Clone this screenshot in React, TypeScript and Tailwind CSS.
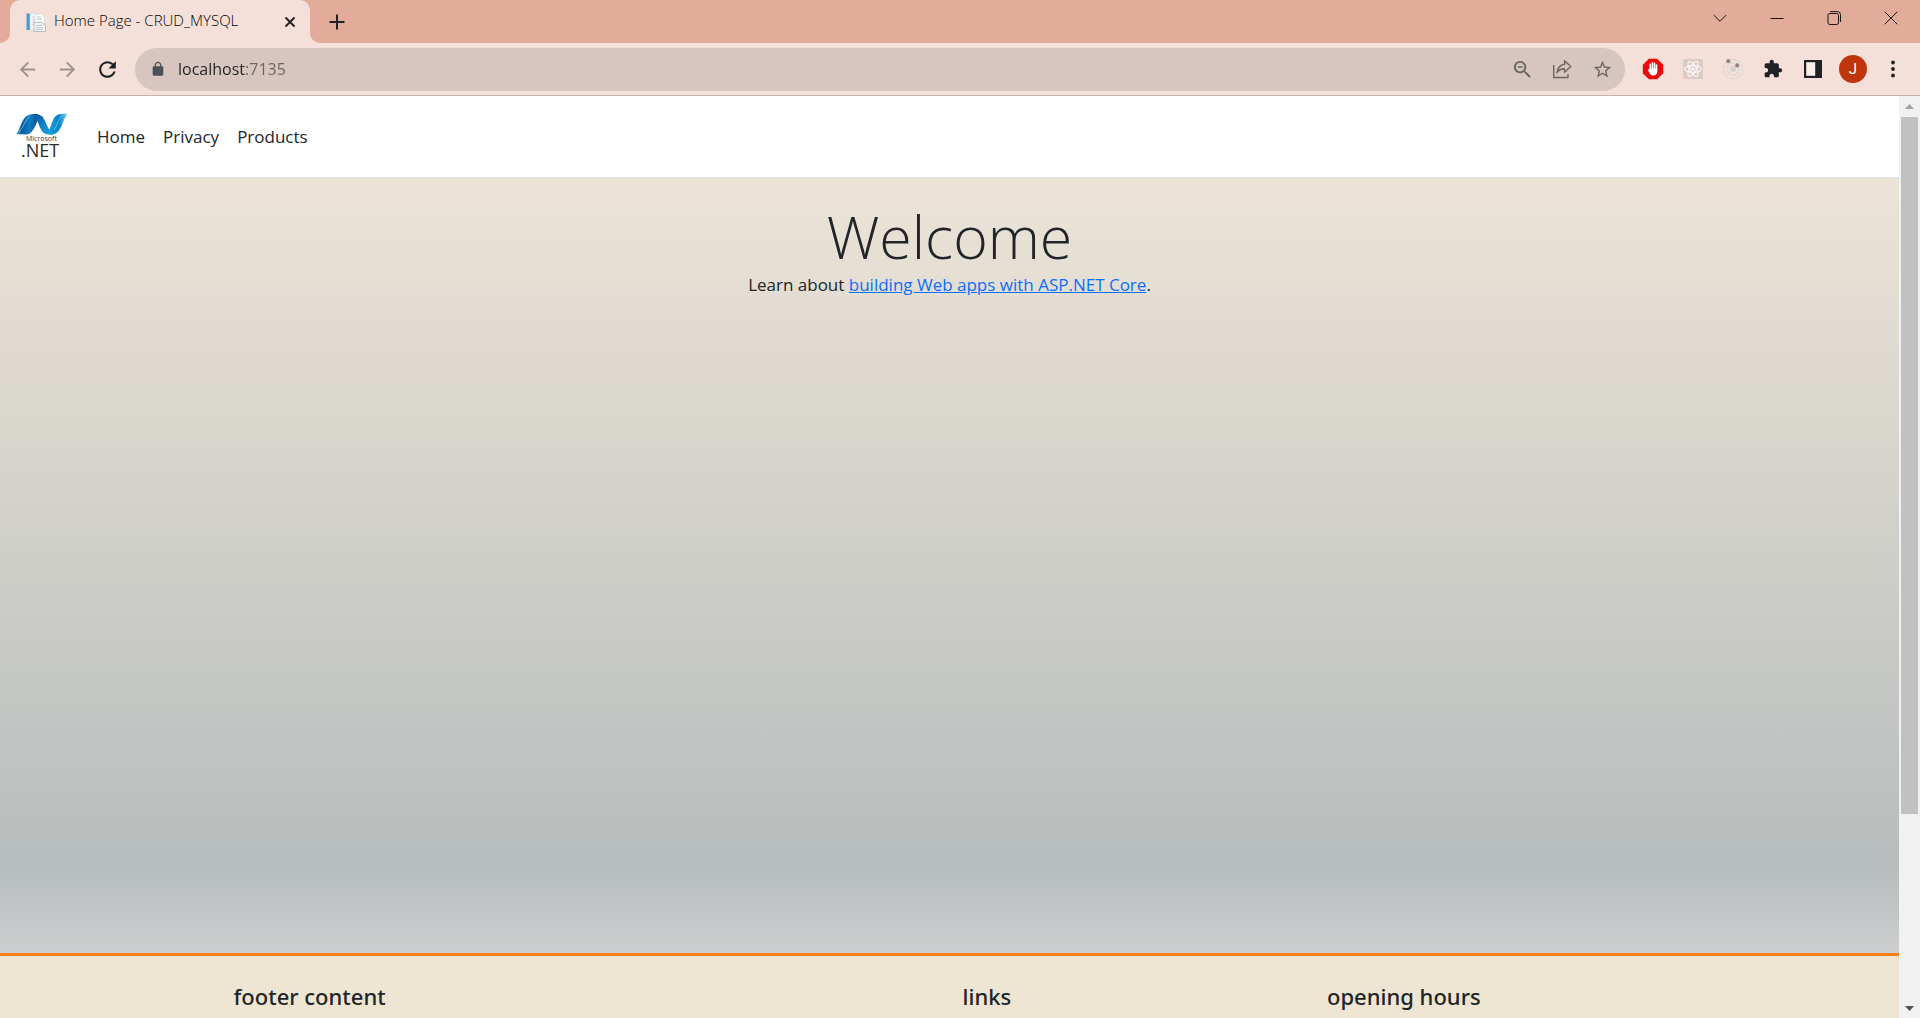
import type { ReactNode } from 'react';

const MATERIAL = {
  back: 'M20 11H7.83l5.59-5.59L12 4l-8 8 8 8 1.41-1.41L7.83 13H20v-2z',
  forward: 'M12 4l-1.41 1.41L16.17 11H4v2h12.17l-5.58 5.59L12 20l8-8z',
  reload:
    'M17.65 6.35C16.2 4.9 14.21 4 12 4c-4.42 0-7.99 3.58-7.99 8s3.57 8 7.99 8c3.73 0 6.84-2.55 7.73-6h-2.08c-.82 2.33-3.04 4-5.65 4-3.31 0-6-2.69-6-6s2.69-6 6-6c1.66 0 3.14.69 4.22 1.78L13 11h7V4l-2.35 2.35z',
  lock: 'M18 8h-1V6c0-2.76-2.24-5-5-5S7 3.24 7 6v2H6c-1.1 0-2 .9-2 2v10c0 1.1.9 2 2 2h12c1.1 0 2-.9 2-2V10c0-1.1-.9-2-2-2zM9 6c0-1.66 1.34-3 3-3s3 1.34 3 3v2H9V6z',
  zoomOut:
    'M15.5 14h-.79l-.28-.27C15.41 12.59 16 11.11 16 9.5 16 5.91 13.09 3 9.5 3S3 5.91 3 9.5 5.91 16 9.5 16c1.61 0 3.09-.59 4.23-1.57l.27.28v.79l5 4.99L20.49 19l-4.99-5zm-6 0C7.01 14 5 11.99 5 9.5S7.01 5 9.5 5 14 7.01 14 9.5 11.99 14 9.5 14zM7 8.7h5v1.6H7z',
  star: 'M22 9.24l-7.19-.62L12 2 9.19 8.63 2 9.24l5.46 4.73L5.82 21 12 17.27 18.18 21l-1.63-7.03L22 9.24zM12 15.4l-3.76 2.27 1-4.28-3.32-2.88 4.38-.38L12 6.1l1.71 4.04 4.38.38-3.32 2.88 1 4.28L12 15.4z',
  puzzle:
    'M20.5 11H19V7c0-1.1-.9-2-2-2h-4V3.5C13 2.12 11.88 1 10.5 1S8 2.12 8 3.5V5H4c-1.1 0-1.99.9-1.99 2v3.8H3.5c1.49 0 2.7 1.21 2.7 2.7s-1.21 2.7-2.7 2.7H2V20c0 1.1.9 2 2 2h3.8v-1.5c0-1.49 1.21-2.7 2.7-2.7 1.49 0 2.7 1.21 2.7 2.7V22H17c1.1 0 2-.9 2-2v-4h1.5c1.38 0 2.5-1.12 2.5-2.5S21.88 11 20.5 11z',
};

function Glyph({ d, className }: { d: string; className: string }) {
  return (
    <svg viewBox="0 0 24 24" className={className} fill="currentColor" aria-hidden="true">
      <path d={d} />
    </svg>
  );
}

function IconButton({ label, children, className = 'text-[#202124]' }: { label: string; children: ReactNode; className?: string }) {
  return (
    <button type="button" aria-label={label} className={`flex h-8 w-10 shrink-0 items-center justify-center ${className}`}>
      {children}
    </button>
  );
}

function WindowButton({ label, children }: { label: string; children: ReactNode }) {
  return (
    <button type="button" aria-label={label} className="flex h-9 w-[57px] items-center justify-center text-[#1c1413]">
      <svg viewBox="0 0 14 14" className="size-3.5" fill="none" stroke="currentColor" strokeWidth="1" aria-hidden="true">
        {children}
      </svg>
    </button>
  );
}

function DocumentsIcon() {
  return (
    <svg viewBox="0 0 20 20" className="h-5 w-5 shrink-0" aria-hidden="true">
      <rect x="0.5" y="1.5" width="4" height="16.5" fill="#4b9bd2" />
      <path d="M4 1h6.500l3 3v14H4z" fill="#f3f5f7" stroke="#c9ced3" strokeWidth="0.6" />
      <path d="M6 5h5M6 7.500h5M6 10h3M6 12.500h2" stroke="#c3c9cf" strokeWidth="0.7" />
      <path d="M9 2h6.500l3 3v8h-9.500z" fill="#fafbfb" stroke="#c9ced3" strokeWidth="0.6" />
      <path d="M8 10.500h8l3.500 3v6H8z" fill="#f2f4f5" stroke="#a9b0b5" strokeWidth="0.8" />
      <path d="M10 13.500h6M10 15.500h7M10 17.500h7M11 5h4M11 7h5" stroke="#b3babf" strokeWidth="0.8" />
    </svg>
  );
}

function TabStrip() {
  return (
    <div className="flex h-[43px] bg-[#e3ab99] pr-px">
      <div className="flex w-2.5 items-end">
        <svg viewBox="0 0 10 10" className="size-2.5" aria-hidden="true">
          <path d="M10 0v10H0A10 10 0 0 0 10 0z" fill="#f5e0d9" />
        </svg>
      </div>
      <div className="flex w-[300px] items-center rounded-t-[10px] bg-[#f5e0d9] pr-2 pl-4">
        <DocumentsIcon />
        <span className="ml-2 flex-1 pb-0.5 text-[15px] font-light whitespace-nowrap text-black">Home Page - CRUD_MYSQL</span>
        <button type="button" aria-label="Close tab" className="flex size-6 items-center justify-center text-[#202124]">
          <svg viewBox="0 0 12 12" className="size-3" stroke="currentColor" strokeWidth="1.9" aria-hidden="true">
            <path d="M1.500 1.500l9 9M10.500 1.500l-9 9" />
          </svg>
        </button>
      </div>
      <div className="flex w-2.5 items-end">
        <svg viewBox="0 0 10 10" className="size-2.5" aria-hidden="true">
          <path d="M0 0v10h10A10 10 0 0 1 0 0z" fill="#f5e0d9" />
        </svg>
      </div>
      <button type="button" aria-label="New tab" className="flex w-[34px] items-center justify-center text-[#202124]">
        <svg viewBox="0 0 16 16" className="size-4" stroke="currentColor" strokeWidth="2" aria-hidden="true">
          <path d="M8 .5v15M.5 8h15" />
        </svg>
      </button>
      <div className="flex-1" />
      <WindowButton label="Search tabs">
        <path d="M.7 4L7 10.300 13.300 4" />
      </WindowButton>
      <WindowButton label="Minimize">
        <path d="M.5 7.500h13" />
      </WindowButton>
      <WindowButton label="Restore">
        <rect x="1" y="2.500" width="10.500" height="11" rx="1.800" />
        <path d="M3 .6h7.500a3 3 0 0 1 3 3V11" />
      </WindowButton>
      <WindowButton label="Close">
        <path d="M.7.7l12.600 12.600M13.300.7L.7 13.300" />
      </WindowButton>
    </div>
  );
}

function Toolbar() {
  return (
    <div className="flex h-[53px] items-center border-b border-[#c4b2ab] bg-[#f5e0d9] px-[7px]">
      <IconButton label="Back" className="text-[#a0918d]">
        <Glyph d={MATERIAL.back} className="size-[23px]" />
      </IconButton>
      <IconButton label="Forward" className="text-[#a0918d]">
        <Glyph d={MATERIAL.forward} className="size-[23px]" />
      </IconButton>
      <IconButton label="Reload">
        <Glyph d={MATERIAL.reload} className="size-[25px]" />
      </IconButton>
      <form className="ml-2 flex h-[43px] flex-1 items-center rounded-full bg-[#d7c6bf] pr-[3px] pl-[15px]">
        <Glyph d={MATERIAL.lock} className="size-4 shrink-0 text-[#4c4f54]" />
        <input
          aria-label="Address"
          className="ml-3 h-8 min-w-0 flex-1 bg-[linear-gradient(90deg,#202124_68px,#6d6361_68px)] bg-clip-text text-[16px] text-transparent outline-none"
          defaultValue="localhost:7135"
        />
        <IconButton label="Zoom" className="text-[#6b6564]">
          <Glyph d={MATERIAL.zoomOut} className="size-[23px]" />
        </IconButton>
        <IconButton label="Share" className="text-[#6b6564]">
          <svg viewBox="0 0 20 20" className="size-5" fill="none" stroke="currentColor" strokeWidth="1.4" aria-hidden="true">
            <path d="M1.700 6v12.500H16V15" />
            <path d="M12.500 1.800L18.800 7.500l-6.300 5.700v-3.400C9 9.700 6.700 11 5 13.700 5.600 9 8 5.900 12.500 5.200z" strokeLinejoin="round" />
          </svg>
        </IconButton>
        <IconButton label="Bookmark this page" className="text-[#6b6564]">
          <Glyph d={MATERIAL.star} className="size-[21px]" />
        </IconButton>
      </form>
      <div className="ml-2 flex items-center">
        <IconButton label="Ad blocker">
          <svg viewBox="0 0 22 22" className="size-[22px]" aria-hidden="true">
            <path d="M6.800.8h8.400l6 6v8.400l-6 6H6.800l-6-6V6.800z" fill="#e90c0c" />
            <path
              d="M8.300 12V6.300M10.400 11V4.800M12.500 11V5.200M14.500 12V7"
              stroke="#fff"
              strokeWidth="1.6"
              strokeLinecap="round"
            />
            <path d="M7.500 10.500h7.800v2.700c0 2.600-1.600 4.400-3.800 4.400-2 0-3-.8-3.900-2.400L6 12.300c-.4-1 .8-1.500 1.500-.6z" fill="#fff" />
          </svg>
        </IconButton>
        <IconButton label="React Developer Tools">
          <svg viewBox="0 0 22 22" className="size-[22px]" aria-hidden="true">
            <rect x="1" y="1" width="20" height="20" rx="1.5" fill="#dccac4" />
            <g fill="none" stroke="#faf5f3" strokeWidth="1.3">
              <ellipse cx="11" cy="11" rx="8.3" ry="3.3" />
              <ellipse cx="11" cy="11" rx="8.3" ry="3.3" transform="rotate(60 11 11)" />
              <ellipse cx="11" cy="11" rx="8.3" ry="3.3" transform="rotate(120 11 11)" />
            </g>
            <circle cx="11" cy="11" r="1.6" fill="#fff" />
          </svg>
        </IconButton>
        <IconButton label="Orbit extension">
          <svg viewBox="0 0 22 22" className="size-[22px]" aria-hidden="true">
            <g fill="none" stroke="#d9d7d6" strokeWidth="1.3">
              <circle cx="11" cy="11" r="9.6" strokeDasharray="4 1" />
              <circle cx="11" cy="11" r="6" strokeDasharray="5 1" />
            </g>
            <circle cx="11" cy="11" r="2.9" fill="#cfd5d8" />
            <circle cx="6.3" cy="3.2" r="2.1" fill="#8d8583" />
            <circle cx="15.2" cy="7.4" r="2.1" fill="#8d8583" />
          </svg>
        </IconButton>
        <IconButton label="Extensions">
          <Glyph d={MATERIAL.puzzle} className="size-5" />
        </IconButton>
        <IconButton label="Side panel">
          <svg viewBox="0 0 18 18" className="size-[18px]" aria-hidden="true">
            <path d="M0 0h18v18H0z" fill="#202124" />
            <path d="M2.200 2.200h9v13.600h-9z" fill="#fbeee9" />
          </svg>
        </IconButton>
        <IconButton label="Profile">
          <span className="flex size-7 items-center justify-center rounded-full bg-[#bf360c] font-[Roboto,sans-serif] text-[15px] text-white">
            J
          </span>
        </IconButton>
        <IconButton label="Menu">
          <svg viewBox="0 0 4 18" className="h-[18px] w-1" fill="#202124" aria-hidden="true">
            <circle cx="2" cy="2.5" r="1.9" />
            <circle cx="2" cy="9" r="1.9" />
            <circle cx="2" cy="15.5" r="1.9" />
          </svg>
        </IconButton>
      </div>
    </div>
  );
}

function DotNetLogo() {
  return (
    <svg viewBox="0 0 54 48" className="h-12 w-[54px]" aria-hidden="true">
      <defs>
        <linearGradient id="ribbonLeft" x1="0" y1="0" x2="1" y2="0">
          <stop offset="0" stopColor="#4fb4e0" />
          <stop offset="0.25" stopColor="#0a5a9c" />
          <stop offset="0.6" stopColor="#0d7dc0" />
          <stop offset="1" stopColor="#0a4f8f" />
        </linearGradient>
        <linearGradient id="ribbonMiddle" x1="0" y1="0" x2="1" y2="1">
          <stop offset="0" stopColor="#0a4f8f" />
          <stop offset="0.5" stopColor="#0d83c8" />
          <stop offset="1" stopColor="#18a6e0" />
        </linearGradient>
        <linearGradient id="ribbonRight" x1="0" y1="0" x2="1" y2="0">
          <stop offset="0" stopColor="#18a6e0" />
          <stop offset="0.6" stopColor="#0882c8" />
          <stop offset="1" stopColor="#8adcf5" />
        </linearGradient>
      </defs>
      <path d="M0 21.500C4 16 5 9 9 4.500 12 1.300 15 .8 21 1c2 2 2 4 .5 7C18 15.500 16 21.800 9 21.500c-3-.2-6-.2-9 0z" fill="url(#ribbonLeft)" />
      <path d="M17 1c7-.4 9.500 1.500 12 7 2 4.500 3.500 9 8.500 13.500-7 .6-10.500-.5-13-6C22 11 21.500 4.500 17 1z" fill="url(#ribbonMiddle)" />
      <path d="M31 20.500C34.500 16 35 11 37.500 6 40 1.500 43 .6 51.500.8 47.500 6 46.500 13 42.500 18c-2.500 3.300-7 4.300-11.500 2.500z" fill="url(#ribbonRight)" />
      <path d="M3 19C8 14 9 7 14 2.500M46 2c-4 4-4 10-8 15" stroke="#7fd0f0" strokeWidth="0.7" fill="none" />
      <text x="10" y="28" fontSize="7" fill="#3a3a3a">
        Microsoft
      </text>
      <text x="5" y="44" fontSize="18" fill="#2b2b2b">
        .NET
      </text>
    </svg>
  );
}

function NavBar() {
  return (
    <header className="flex h-[82px] items-center border-b border-[#dee2e6] bg-white pl-4">
      <a href="#home" aria-label="Microsoft .NET" className="block">
        <DotNetLogo />
      </a>
      <nav className="ml-[27px] flex gap-[18px] text-[17px] leading-7 text-[#212529]">
        <a href="#home">Home</a>
        <a href="#privacy">Privacy</a>
        <a href="#products">Products</a>
      </nav>
    </header>
  );
}

function Footer() {
  return (
    <footer className="border-t-[3px] border-[#f97d1c] bg-[#eee5d3] pt-[25px] pb-[7px]">
      <div className="mx-auto grid max-w-[1458px] grid-cols-4 font-['Noto_Sans',sans-serif] text-[22px] leading-[30px] font-medium text-[#212529]">
        <h5 className="col-span-2 px-[13px]">footer content</h5>
        <h5 className="px-[13px]">links</h5>
        <h5 className="px-[13px]">opening hours</h5>
      </div>
    </footer>
  );
}

function ScrollBar() {
  return (
    <div className="flex w-[21px] shrink-0 flex-col items-center bg-[#f1f1f1]" aria-hidden="true">
      <svg viewBox="0 0 9 5" className="my-2 h-[5px] w-[9px]">
        <path d="M4.500 0L9 5H0z" fill="#a3a3a3" />
      </svg>
      <div className="flex w-[17px] flex-1 flex-col">
        <div className="h-[79%] bg-[#c1c1c1]" />
      </div>
      <svg viewBox="0 0 9 5" className="my-[7px] h-[5px] w-[9px]">
        <path d="M4.500 5L9 0H0z" fill="#505050" />
      </svg>
    </div>
  );
}

export default function App() {
  return (
    <div className="flex h-screen flex-col overflow-hidden font-['Open_Sans','Noto_Sans',sans-serif]">
      <TabStrip />
      <Toolbar />
      <div className="flex min-h-0 flex-1">
        <div className="flex min-w-0 flex-1 flex-col">
          <NavBar />
          <main className="flex-1 bg-linear-to-b from-[#ece4d7] via-[#b7bdbd] via-89% to-[#cdcecf] pt-6 text-center text-[#212529]">
            <h1 className="text-[59px] leading-[69px] font-light">Welcome</h1>
            <p className="text-[17px] leading-7">
              Learn about{' '}
              <a href="#docs" className="text-[#0d6efd] underline">
                building Web apps with ASP.NET Core
              </a>
              .
            </p>
          </main>
          <Footer />
        </div>
        <ScrollBar />
      </div>
    </div>
  );
}
